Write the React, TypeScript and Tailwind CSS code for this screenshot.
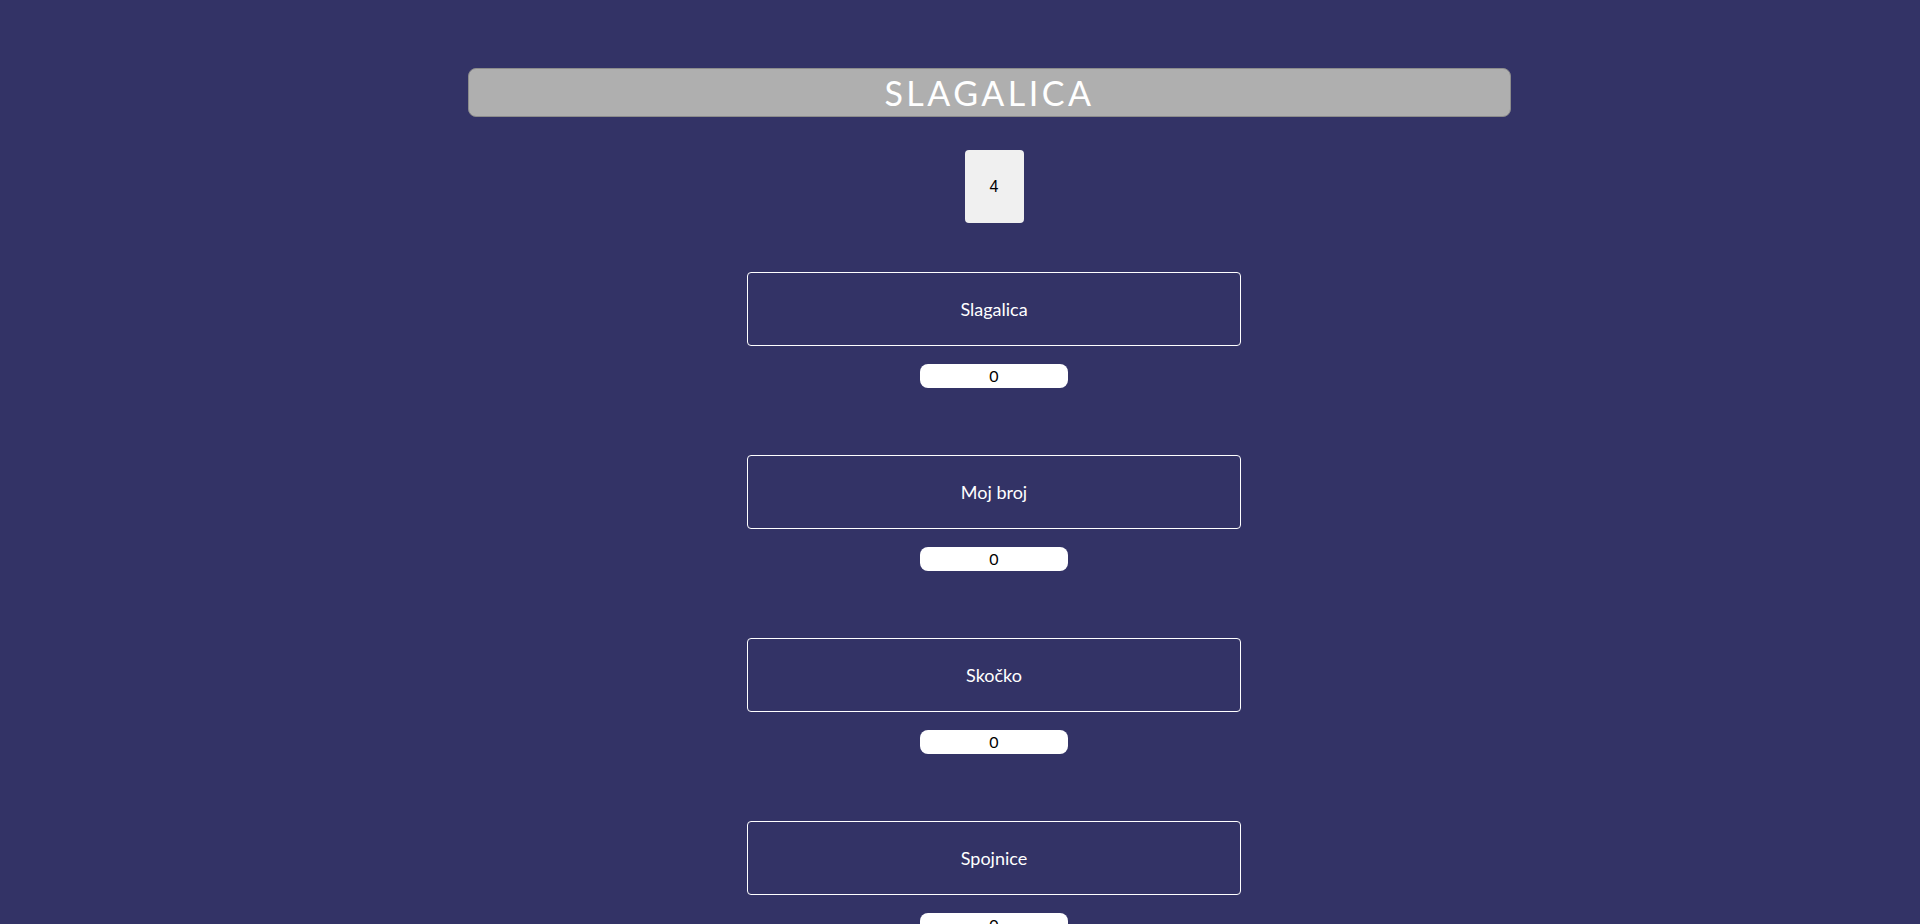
const games = ["Slagalica", "Moj broj", "Skočko", "Spojnice", "Asocijacije", "Ko zna zna"];

function GameRow({ name }: { name: string }) {
  return (
    <div className="flex flex-col items-center">
      <div className="flex h-[74px] w-[494px] items-center justify-center rounded-[4px] border border-white text-[18px] text-white">
        {name}
      </div>
      <div className="mt-[18px] flex h-[24px] w-[148px] items-center justify-center rounded-[8px] bg-white text-[16px] text-black">
        0
      </div>
    </div>
  );
}

export default function App() {
  return (
    <div className="min-h-[1560px] bg-[#333366] pt-[68px] pb-[250px] font-['Lato','Noto_Sans',sans-serif]">
      {/* naslov */}
      <div className="ml-[468px] flex h-[49px] w-[1043px] items-center justify-center rounded-[8px] border border-[#8c8c8c] bg-[#afafaf]">
        <h1 className="text-[34px] leading-none tracking-[3.5px] text-white">SLAGALICA</h1>
      </div>

      <div className="flex flex-col items-center pl-[68px]">
        <button className="mt-[33px] flex h-[73px] w-[59px] items-center justify-center rounded-[4px] bg-[#f0f0f0] font-['Liberation_Sans',sans-serif] text-[16px] text-black">
          4
        </button>

        <div className="mt-[49px] flex flex-col gap-[67px]">
          {games.map((g) => (
            <GameRow key={g} name={g} />
          ))}
        </div>
      </div>
    </div>
  );
}
